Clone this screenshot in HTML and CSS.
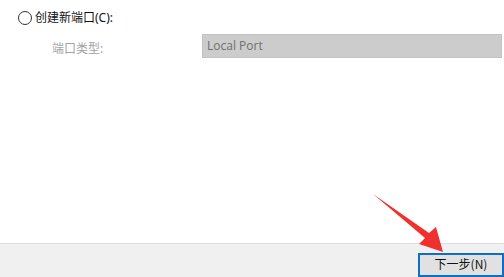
FILE: index.html
```html
<!DOCTYPE html>
<html lang="zh-CN">
<head>
<meta charset="utf-8">
<link rel="stylesheet" href="styles.css">
</head>
<body>
<div class="page">
  <div class="content">
    <label class="radio-row">
      <span class="radio"></span>
      <span class="radio-text">创建新端口(C):</span>
    </label>
    <div class="field-row">
      <span class="field-label">端口类型:</span>
      <div class="field-box">Local Port</div>
    </div>
  </div>
  <div class="footer">
    <button class="btn-next">下一步(N)</button>
  </div>
  <svg class="arrow" width="504" height="277" viewBox="0 0 504 277">
    <polygon points="373,194 429,233 436,227 443,252 419,244 425,238" fill="#f0302e"/>
  </svg>
</div>
</body>
</html>
```
FILE: styles.css
```css
html, body {
  margin: 0;
  padding: 0;
  background: #ffffff;
}
.page {
  position: relative;
  width: 504px;
  height: 277px;
  overflow: hidden;
  display: flex;
  flex-direction: column;
  font-family: "Noto Sans", "Noto Sans CJK SC", sans-serif;
  font-size: 12px;
}
.content {
  height: 247px;
  padding: 9px 0 0 18px;
  box-sizing: border-box;
  display: flex;
  flex-direction: column;
}
.radio-row {
  display: flex;
  align-items: center;
  gap: 3px;
  height: 18px;
  color: #111;
}
.radio {
  width: 12px;
  height: 12px;
  border: 1px solid #333;
  border-radius: 50%;
  box-sizing: content-box;
}
.radio-text {
  line-height: 18px;
}
.field-row {
  display: flex;
  align-items: center;
  margin-top: 7px;
  padding-left: 34px;
}
.field-label {
  width: 150px;
  color: #a3a3a3;
  padding-top: 3px;
}
.field-box {
  width: 300px;
  height: 24px;
  box-sizing: border-box;
  background: #cccccc;
  border: 1px solid #c2c2c2;
  color: #6f6f6f;
  padding-left: 4px;
  line-height: 22px;
  font-family: "Open Sans", "Noto Sans", sans-serif;
}
.footer {
  flex: 1;
  background: #f0f0f0;
  border-top: 1px solid #dedede;
  display: flex;
  justify-content: flex-end;
  align-items: flex-start;
  padding-top: 9px;
}
.btn-next {
  width: 86px;
  height: 24px;
  background: #e1e1e1;
  border: 2px solid #0f6fc6;
  font-family: "Noto Sans CJK SC", sans-serif;
  font-size: 12px;
  color: #111;
  padding: 0 0 2px 0;
  line-height: 18px;
}
.arrow {
  position: absolute;
  left: 0;
  top: 0;
  pointer-events: none;
}
```
